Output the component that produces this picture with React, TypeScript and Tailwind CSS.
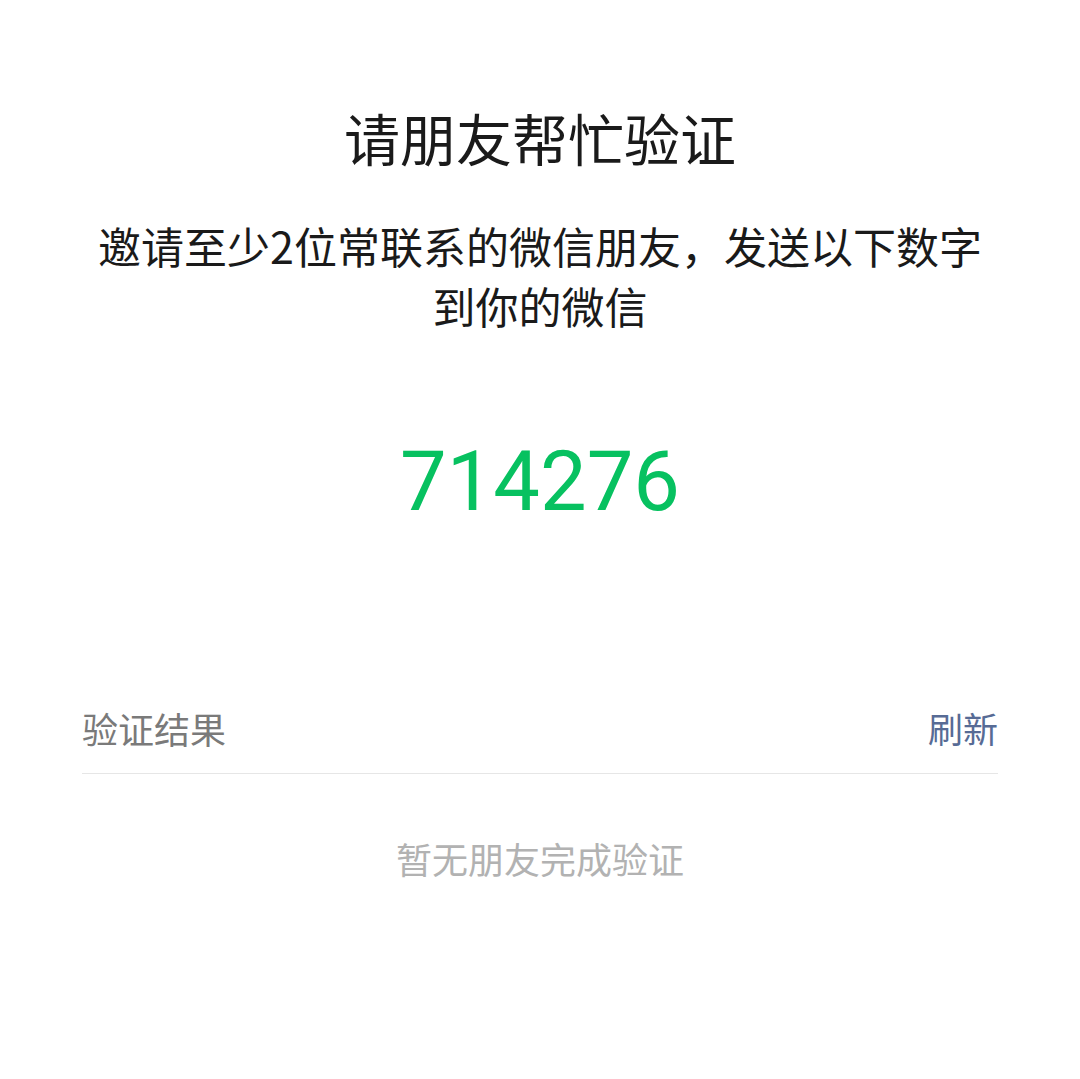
const FONT = { fontFamily: '"Noto Sans CJK SC", "Noto Sans", sans-serif' };

export default function App() {
  return (
    <div className="min-h-[1079px] w-full bg-white px-[82px] pt-[98px]" style={FONT}>
      <h1 className="text-center text-[56px] leading-[78px] font-normal text-[#1a1a1a]">
        请朋友帮忙验证
      </h1>
      <p className="mt-[39px] text-center text-[43px] leading-[60px] text-[#1a1a1a]">
        邀请至少2位常联系的微信朋友，发送以下数字到你的微信
      </p>
      <div
        className="mt-[97px] text-center text-[83px] leading-[100px] text-[#07c160]"
        style={{ fontFamily: 'Roboto, "Noto Sans", sans-serif' }}
      >
        714276
      </div>

      <div className="mt-[172px] flex items-center justify-between border-b border-[#e6e6e6] pb-[21px]">
        <span className="text-[36px] leading-[48px] text-[#7a7a7a]">验证结果</span>
        <button className="text-[35px] leading-[48px] text-[#576b95]">刷新</button>
      </div>

      <div className="mt-[60px] text-center text-[36px] leading-[48px] text-[#b2b2b2]">
        暂无朋友完成验证
      </div>
    </div>
  );
}
